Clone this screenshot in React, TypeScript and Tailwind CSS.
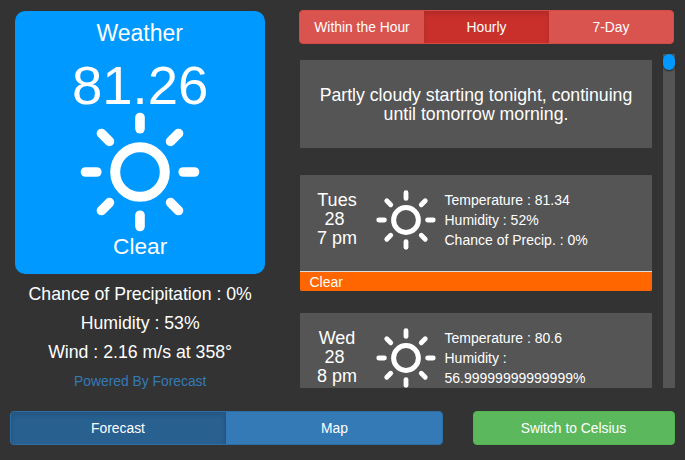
function Sun({ className }: { className: string }) {
  return (
    <svg viewBox="0 0 120 120" className={className} fill="none" stroke="white">
      <circle cx="60" cy="60" r="24.8" strokeWidth="10" />
      {[0, 45, 90, 135, 180, 225, 270, 315].map((angle) => (
        <path
          key={angle}
          d="M60 5.5V16.8"
          strokeWidth="9.6"
          strokeLinecap="round"
          transform={`rotate(${angle} 60 60)`}
        />
      ))}
    </svg>
  );
}

interface Hour {
  day: string;
  date: string;
  time: string;
  lines: string[];
  summary?: string;
}

const hours: Hour[] = [
  {
    day: "Tues",
    date: "28",
    time: "7 pm",
    lines: ["Temperature : 81.34", "Humidity : 52%", "Chance of Precip. : 0%"],
    summary: "Clear",
  },
  {
    day: "Wed",
    date: "28",
    time: "8 pm",
    lines: ["Temperature : 80.6", "Humidity : 56.99999999999999%"],
  },
];

function HourCard({ hour }: { hour: Hour }) {
  return (
    <article className="flex shrink-0 flex-col rounded-[1px] bg-[#555]">
      <div className="flex h-[96px] shrink-0">
        <div className="ml-[10px] w-[54px] pt-[15.6px] text-center text-[18px] leading-[19px]">
          <div>{hour.day}</div>
          <div className="pr-[5px]">{hour.date}</div>
          <div>{hour.time}</div>
        </div>
        <Sun className="mt-[14.5px] ml-[12px] size-[60px] shrink-0" />
        <div className="ml-[8.5px] w-[160px] pt-[15px] text-[14px] leading-[20px]">
          {hour.lines.map((line) => (
            <div key={line}>{line}</div>
          ))}
        </div>
      </div>
      {hour.summary && (
        <div className="h-[20.4px] shrink-0 rounded-b-[2px] border-t border-[#ddd] bg-[#ff6600] pl-[9.5px] text-[14px] leading-[21px]">
          {hour.summary}
        </div>
      )}
    </article>
  );
}

export default function App() {
  return (
    <main className="flex h-[460px] w-[685px] flex-col overflow-hidden bg-[#333] font-['Liberation_Sans',Arial,sans-serif] text-white">
      <div className="flex h-[411px] shrink-0">
        <section className="ml-[14.7px] w-[250px] pt-[11px] text-center">
          <div className="flex h-[263px] flex-col items-center rounded-[10px] bg-[#0099ff]">
            <h1 className="mt-[9px] text-[23px] leading-[26px]">Weather</h1>
            <div className="mt-[10px] pl-[1px] text-[54.5px] leading-[60px]">81.26</div>
            <Sun className="-mt-[4px] size-[120px]" />
            <div className="mt-px pl-px text-[22.7px] leading-[26px]">Clear</div>
          </div>
          <div className="mt-[6px] pl-px text-[17.7px] leading-[29px]">
            <div>Chance of Precipitation : 0%</div>
            <div>Humidity : 53%</div>
            <div>Wind : 2.16 m/s at 358°</div>
          </div>
          <a className="block pl-px text-[13.85px] leading-[29px] text-[#337ab7]">Powered By Forecast</a>
        </section>
        <section className="ml-[34.3px] w-[376px] pt-[10px]">
          <nav className="flex h-[34px] w-[375px] overflow-hidden rounded-[4px] border border-[#d74a46] bg-[#d9534f] text-[13.85px]">
            <button className="w-[124px]">Within the Hour</button>
            <button className="w-[125px] bg-[#c9302c] shadow-[inset_0_3px_5px_rgba(0,0,0,0.125)]">Hourly</button>
            <button className="flex-1">7-Day</button>
          </nav>
          <div className="mt-[10px] flex h-[334px] pl-px">
            <div className="flex w-[352px] flex-col overflow-hidden pt-[6px]">
              <div className="flex h-[88px] shrink-0 items-center justify-center rounded-[1px] bg-[#555] px-[10px] pt-px text-center text-[17.7px] leading-[19px]">
                Partly cloudy starting tonight, continuing until tomorrow morning.
              </div>
              <div className="mt-[27px] flex flex-col gap-[22px]">
                {hours.map((hour) => (
                  <HourCard key={hour.time} hour={hour} />
                ))}
              </div>
            </div>
            <div className="ml-[11px] w-[12px] bg-[#555]">
              <div className="h-[16px] rounded-full bg-[#0099ff] shadow-[0_1px_2px_rgba(0,0,0,0.6)]" />
            </div>
          </div>
        </section>
      </div>
      <footer className="flex h-[34px] text-[13.85px]">
        <div className="ml-[10px] flex w-[433px] overflow-hidden rounded-[4px] border border-[#2e6da4] bg-[#337ab7]">
          <button className="w-[215px] border-r border-[#24557f] bg-[#286090] shadow-[inset_0_3px_5px_rgba(0,0,0,0.125)]">Forecast</button>
          <button className="flex-1 pl-px">Map</button>
        </div>
        <button className="ml-[30px] w-[202px] rounded-[4px] border border-[#54b354] bg-[#5cb85c] pr-px">Switch to Celsius</button>
      </footer>
    </main>
  );
}
